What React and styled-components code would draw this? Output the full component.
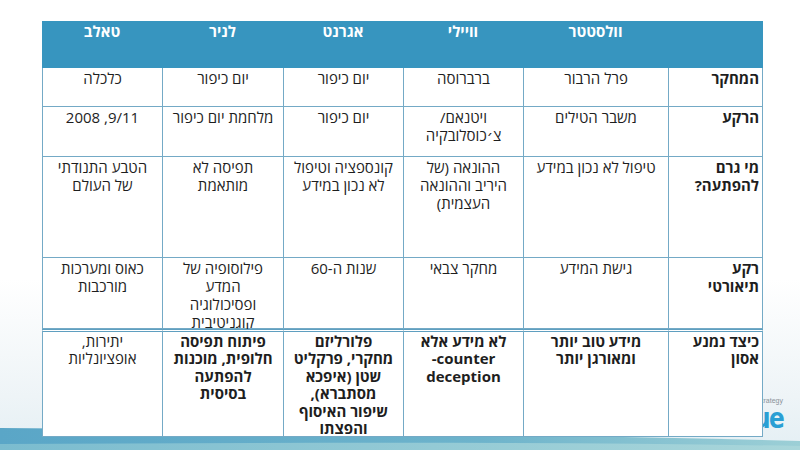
import styled, { createGlobalStyle } from "styled-components";

const GlobalStyle = createGlobalStyle`
  html, body {
    margin: 0;
    padding: 0;
    background: #ffffff;
  }
  * {
    box-sizing: border-box;
  }
`;

const Slide = styled.div`
  position: relative;
  width: 800px;
  height: 450px;
  overflow: hidden;
  display: flex;
  align-items: flex-start;
  padding: 21px 0 0 42px;
  background: linear-gradient(to bottom, #ffffff 0%, #ffffff 62%, #eef4f7 88%, #e4eff4 100%);
  font-family: "Open Sans", "DejaVu Sans", "Liberation Sans", sans-serif;
`;

const Backdrop = styled.svg`
  position: absolute;
  left: 0;
  top: 0;
  width: 800px;
  height: 450px;
  z-index: 0;
`;

const Logo = styled.div`
  position: absolute;
  right: 17px;
  top: 397px;
  z-index: 0;
  display: flex;
  flex-direction: column;
  align-items: flex-end;
  line-height: 1;
`;

const LogoSmall = styled.span`
  font-family: "Liberation Sans", sans-serif;
  font-size: 7px;
  color: #8a9299;
`;

const LogoBig = styled.span`
  font-family: "DejaVu Sans", sans-serif;
  font-size: 29px;
  font-weight: bold;
  color: #2a9fd4;
  letter-spacing: -2px;
  transform: scaleX(0.8);
  transform-origin: right center;
`;

const Table = styled.div`
  position: relative;
  z-index: 1;
  direction: rtl;
  display: grid;
  width: 721px;
  grid-template-columns: 95px 145px 120px 120px 121px 120px;
  grid-template-rows: 47px 39px 50px 101px 71px 108px;
`;

const HeadCell = styled.div`
  background: #3795bf;
  color: #ffffff;
  font-weight: bold;
  font-size: 15px;
  line-height: 18px;
  text-align: center;
  padding-top: 1px;
`;

const Cell = styled.div`
  background: #ffffff;
  color: #1e1e1e;
  font-size: 15px;
  line-height: 18px;
  white-space: nowrap;
  padding: 1px 3px 0;
  text-align: ${(p) => (p.$label ? "right" : "center")};
  font-weight: ${(p) => (p.$label || p.$bold ? "bold" : "normal")};
  border-left: 1px solid #74aac6;
  border-right: ${(p) => (p.$label ? "1px solid #74aac6" : "none")};
  border-bottom: 1px solid #74aac6;
  border-top: ${(p) => (p.$last ? "3px double #5f9fc0" : "none")};
  line-height: ${(p) => (p.$last ? "17.4px" : "18px")};
  overflow: visible;
  position: relative;
  z-index: ${(p) => (p.$last ? 2 : 1)};
`;

const headers = ["", "וולסטטר", "וויילי", "אגרנט", "לניר", "טאלב"];

const rows = [
  [["המחקר"], ["פרל הרבור"], ["ברברוסה"], ["יום כיפור"], ["יום כיפור"], ["כלכלה"]],
  [["הרקע"], ["משבר הטילים"], ["ויטנאם/", "צ׳כוסלובקיה"], ["יום כיפור"], ["מלחמת יום כיפור"], ["9/11, 2008"]],
  [
    ["מי גרם", "להפתעה?"],
    ["טיפול לא נכון במידע"],
    ["ההונאה (של", "היריב וההונאה", "העצמית)"],
    ["קונספציה וטיפול", "לא נכון במידע"],
    ["תפיסה לא", "מותאמת"],
    ["הטבע התנודתי", "של העולם"],
  ],
  [
    ["רקע", "תיאורטי"],
    ["גישת המידע"],
    ["מחקר צבאי"],
    ["שנות ה-60"],
    ["פילוסופיה של", "המדע", "ופסיכולוגיה", "קוגניטיבית"],
    ["כאוס ומערכות", "מורכבות"],
  ],
];

const lastRow = [
  { lines: ["כיצד נמנע", "אסון"], bold: true },
  { lines: ["מידע טוב יותר", "ומאורגן יותר"], bold: true },
  { lines: ["לא מידע אלא", "counter-", "deception"], bold: true },
  { lines: ["פלורליזם", "מחקרי, פרקליט", "שטן (איפכא", "מסתברא),", "שיפור האיסוף", "והפצתו"], bold: true },
  { lines: ["פיתוח תפיסה", "חלופית, מוכנות", "להפתעה", "בסיסית"], bold: true },
  { lines: ["יתירות,", "אופציונליות"], bold: false },
];

function Lines({ lines }) {
  return lines.map((l, i) => (
    <span key={i}>
      {i > 0 && <br />}
      {l}
    </span>
  ));
}

export default function App() {
  return (
    <>
      <GlobalStyle />
      <Slide>
        <Backdrop viewBox="0 0 800 450">
          <defs>
            <linearGradient id="band" x1="0" y1="0" x2="1" y2="0">
              <stop offset="0" stopColor="#5aa6c7" />
              <stop offset="0.6" stopColor="#6db3cb" />
              <stop offset="1" stopColor="#9ccfd6" />
            </linearGradient>
            <linearGradient id="band2" x1="0" y1="0" x2="1" y2="0">
              <stop offset="0" stopColor="#7bbccf" />
              <stop offset="1" stopColor="#a9d6da" />
            </linearGradient>
          </defs>
          <path d="M0 428 C 220 430, 520 434, 800 441 L 800 450 L 0 450 Z" fill="url(#band)" />
          <path d="M0 444 C 250 443, 520 441, 800 446 L 800 450 L 0 450 Z" fill="url(#band2)" />
        </Backdrop>
        <Logo>
          <LogoSmall>blue strategy</LogoSmall>
          <LogoBig>blue</LogoBig>
        </Logo>
        <Table>
          {headers.map((h, i) => (
            <HeadCell key={"h" + i}>{h}</HeadCell>
          ))}
          {rows.map((row, r) =>
            row.map((lines, c) => (
              <Cell key={r + "-" + c} $label={c === 0}>
                <Lines lines={lines} />
              </Cell>
            ))
          )}
          {lastRow.map((cell, c) => (
            <Cell key={"l" + c} $label={c === 0} $bold={cell.bold} $last>
              <Lines lines={cell.lines} />
            </Cell>
          ))}
        </Table>
      </Slide>
    </>
  );
}
